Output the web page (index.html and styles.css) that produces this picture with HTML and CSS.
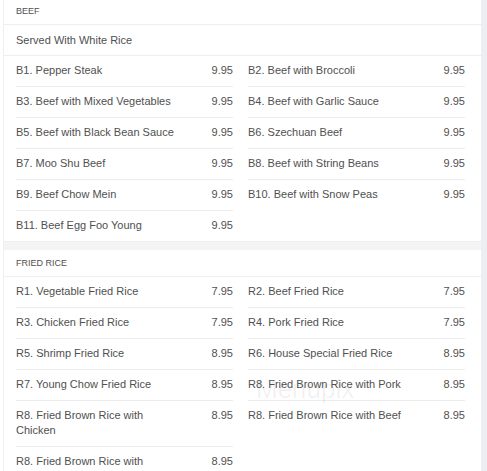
FILE: index.html
```html
<!DOCTYPE html>
<html lang="en">
<head>
  <meta charset="UTF-8">
  <title>Menu</title>
  <link rel="stylesheet" href="styles.css">
</head>
<body>
  <div class="page">
    <div class="menu">
      <div class="section first">
        <div class="cat">BEEF</div>
        <div class="note">Served With White Rice</div>
        <div class="items">
          <div class="item"><span>B1. Pepper Steak</span><span>9.95</span></div>
          <div class="item"><span>B2. Beef with Broccoli</span><span>9.95</span></div>
          <div class="item"><span>B3. Beef with Mixed Vegetables</span><span>9.95</span></div>
          <div class="item"><span>B4. Beef with Garlic Sauce</span><span>9.95</span></div>
          <div class="item"><span>B5. Beef with Black Bean Sauce</span><span>9.95</span></div>
          <div class="item"><span>B6. Szechuan Beef</span><span>9.95</span></div>
          <div class="item"><span>B7. Moo Shu Beef</span><span>9.95</span></div>
          <div class="item"><span>B8. Beef with String Beans</span><span>9.95</span></div>
          <div class="item"><span>B9. Beef Chow Mein</span><span>9.95</span></div>
          <div class="item last"><span>B10. Beef with Snow Peas</span><span>9.95</span></div>
          <div class="item last"><span>B11. Beef Egg Foo Young</span><span>9.95</span></div>
        </div>
      </div>
      <div class="band"></div>
      <div class="section">
        <div class="cat">FRIED RICE</div>
        <div class="items">
          <div class="item"><span>R1. Vegetable Fried Rice</span><span>7.95</span></div>
          <div class="item"><span>R2. Beef Fried Rice</span><span>7.95</span></div>
          <div class="item"><span>R3. Chicken Fried Rice</span><span>7.95</span></div>
          <div class="item"><span>R4. Pork Fried Rice</span><span>7.95</span></div>
          <div class="item"><span>R5. Shrimp Fried Rice</span><span>8.95</span></div>
          <div class="item"><span>R6. House Special Fried Rice</span><span>8.95</span></div>
          <div class="item"><span>R7. Young Chow Fried Rice</span><span>8.95</span></div>
          <div class="item"><span>R8. Fried Brown Rice with Pork</span><span>8.95</span></div>
          <div class="item"><span>R8. Fried Brown Rice with<br>Chicken</span><span>8.95</span></div>
          <div class="item last"><span>R8. Fried Brown Rice with Beef</span><span>8.95</span></div>
          <div class="item"><span>R8. Fried Brown Rice with<br>Shrimp</span><span>8.95</span></div>
        </div>
      </div>
      <div class="mark">Menupix</div>
    </div>
    <div class="scroll"></div>
  </div>
</body>
</html>
```

FILE: styles.css
```css
body {
  margin: 0;
  font-family: "Liberation Sans", Arial, sans-serif;
  font-size: 11px;
  color: #505050;
  background: #fff;
  overflow: hidden;
}
.page {
  display: flex;
  height: 471px;
}
.menu {
  flex: 1;
  position: relative;
  border-left: 1px solid #f0f0f0;
  margin-left: 3px;
  overflow: hidden;
}
.scroll {
  width: 6px;
  background: #eceef2;
}
.section.first {
  margin-top: -2px;
}
.cat {
  font-size: 9px;
  line-height: 12px;
  padding: 7px 12px 7px;
  border-bottom: 1px solid #eee;
}
.note {
  line-height: 15px;
  padding: 8px 12px 7px;
  border-bottom: 1px solid #eee;
}
.items {
  display: grid;
  grid-template-columns: 217px 217px;
  column-gap: 15px;
  padding: 0 12px;
}
.item {
  display: flex;
  justify-content: space-between;
  align-items: flex-start;
  line-height: 15px;
  padding: 7px 0 8px;
  border-bottom: 1px solid #ececec;
}
.item.last {
  border-bottom: none;
}
.band {
  height: 8px;
  background: #f4f4f4;
  border-top: 1px solid #f0f0f0;
}
.mark {
  position: absolute;
  left: 252px;
  top: 374px;
  font-size: 26px;
  color: rgba(0,0,0,0.06);
  pointer-events: none;
}
```
